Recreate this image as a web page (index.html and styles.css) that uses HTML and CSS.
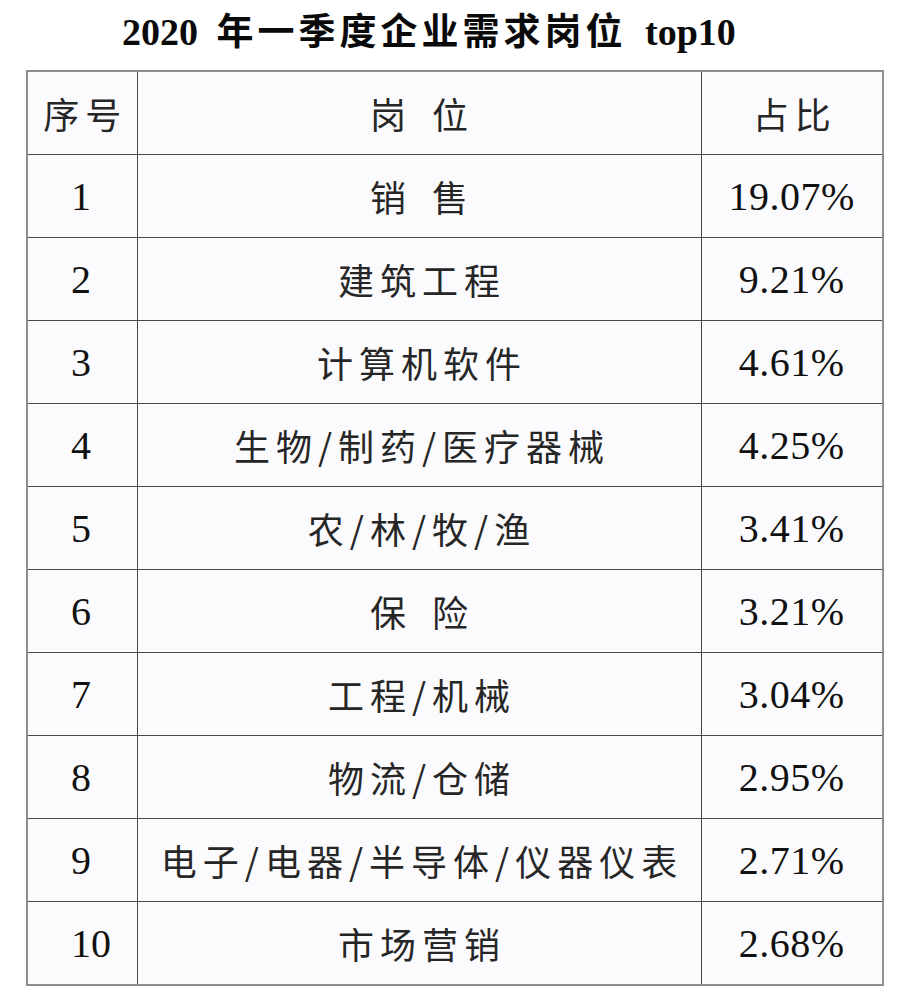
FILE: index.html
```html
<!DOCTYPE html>
<html lang="zh-CN">
<head>
<meta charset="utf-8">
<title>2020年一季度企业需求岗位top10</title>
<link rel="stylesheet" href="styles.css">
</head>
<body>
<div class="page">
  <h1 class="title"><span class="lat">2020</span> <span class="cjk">年一季度企业需求岗位</span> <span class="lat">top10</span></h1>
  <table class="grid">
    <colgroup>
      <col class="c1"><col class="c2"><col class="c3">
    </colgroup>
    <thead>
      <tr><th>序号</th><th>岗 位</th><th>占比</th></tr>
    </thead>
    <tbody>
      <tr><td class="idx">1</td><td>销 售</td><td class="pct">19.07%</td></tr>
      <tr><td class="idx">2</td><td>建筑工程</td><td class="pct">9.21%</td></tr>
      <tr><td class="idx">3</td><td>计算机软件</td><td class="pct">4.61%</td></tr>
      <tr><td class="idx">4</td><td>生物/制药/医疗器械</td><td class="pct">4.25%</td></tr>
      <tr><td class="idx">5</td><td>农/林/牧/渔</td><td class="pct">3.41%</td></tr>
      <tr><td class="idx">6</td><td>保 险</td><td class="pct">3.21%</td></tr>
      <tr><td class="idx">7</td><td>工程/机械</td><td class="pct">3.04%</td></tr>
      <tr><td class="idx">8</td><td>物流/仓储</td><td class="pct">2.95%</td></tr>
      <tr><td class="idx">9</td><td>电子/电器/半导体/仪器仪表</td><td class="pct">2.71%</td></tr>
      <tr><td class="idx">10</td><td>市场营销</td><td class="pct">2.68%</td></tr>
    </tbody>
  </table>
</div>
</body>
</html>
```

FILE: styles.css
```css
html, body {
  margin: 0;
  padding: 0;
  background: #ffffff;
}

.page {
  width: 904px;
  padding-left: 26px;
  box-sizing: border-box;
}

.title {
  margin: 0;
  height: 70px;
  padding: 8px 0 0 96px;
  box-sizing: border-box;
  font-weight: 700;
  color: #0a0a0a;
  white-space: pre;
  font-size: 38px;
  line-height: 42px;
  word-spacing: 9px;
  font-family: "Liberation Serif", serif;
}

.title .lat {
  font-family: "Liberation Serif", serif;
  font-size: 38px;
}

.title .cjk {
  font-family: "Noto Sans CJK SC", sans-serif;
  font-weight: 700;
  font-size: 37px;
  letter-spacing: 4px;
  word-spacing: 0;
}

.grid {
  border-collapse: collapse;
  width: 856px;
  table-layout: fixed;
  background: #fbfbfd;
  border: 2px solid #8e8e8e;
}

.c1 { width: 110px; }
.c2 { width: 564px; }
.c3 { width: 182px; }

.grid th,
.grid td {
  height: 82px;
  padding: 0;
  text-align: center;
  vertical-align: middle;
  border: 1px solid #4a4a4a;
  font-family: "Noto Sans CJK SC", sans-serif;
  font-weight: 400;
  font-size: 36px;
  letter-spacing: 6px;
  word-spacing: 6px;
  color: #262626;
  text-indent: 6px;
  white-space: nowrap;
}

.grid .idx,
.grid .pct {
  font-family: "Liberation Serif", serif;
  font-weight: 400;
  font-size: 40px;
  letter-spacing: 0;
  word-spacing: 0;
  text-indent: 0;
  color: #111111;
}

.grid .idx {
  text-align: left;
  padding-left: 43px;
}

.grid .pct {
  letter-spacing: 0.5px;
}
```
